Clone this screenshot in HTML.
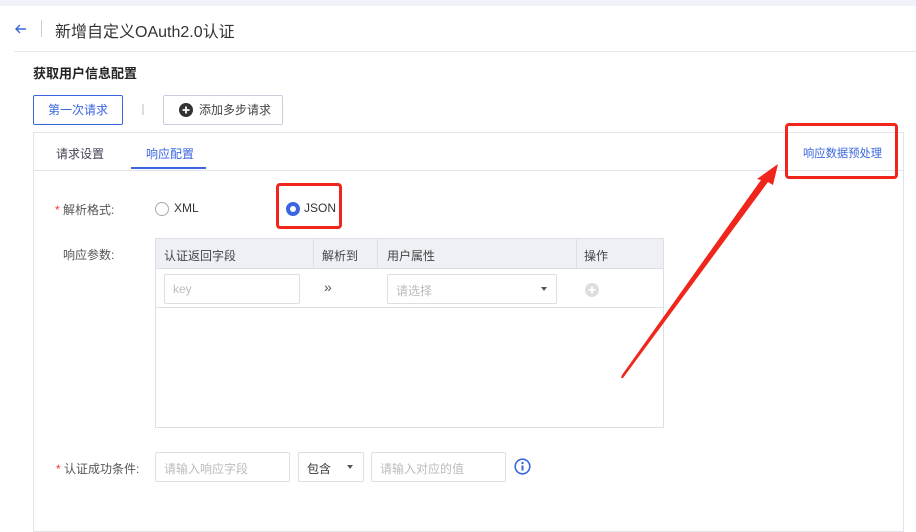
<!DOCTYPE html>
<html><head><meta charset="utf-8"><style>
*{box-sizing:border-box;margin:0;padding:0}
body{width:916px;height:524px;background:#fff;font-family:"Liberation Sans","Noto Sans CJK SC",sans-serif;position:relative;overflow:hidden;color:#333}
.a{position:absolute}
.t{font-size:12px;white-space:nowrap}
.inp{position:absolute;border:1px solid #dcdfe6;border-radius:2px;background:#fff}
.ph{color:#bbb;font-size:12px;position:absolute;top:7px;left:8px;white-space:nowrap}
</style></head><body>
<div class="a" style="left:0;top:0;width:916px;height:6px;background:#f0f2f7"></div>
<svg class="a" style="left:14px;top:22px" width="14" height="14" viewBox="0 0 14 14"><path d="M12 7H2M6 3L2 7l4 4" stroke="#3a66e0" stroke-width="1.4" fill="none"/></svg>
<div class="a" style="left:41px;top:20px;width:1px;height:17px;background:#ccc"></div>
<div class="a" style="left:55px;top:18px;font-size:16px;color:#333">新增自定义OAuth2.0认证</div>
<div class="a" style="left:14px;top:51px;width:902px;height:1px;background:#e6e8ee"></div>
<div class="a" style="left:33px;top:63px;font-size:13px;font-weight:bold;color:#222">获取用户信息配置</div>
<div class="a" style="left:33px;top:95px;width:90px;height:30px;border:1px solid #3a66e0;border-radius:2px;color:#3a66e0;font-size:12px;text-align:center;line-height:28px">第一次请求</div>
<div class="a" style="left:142px;top:104px;width:2px;height:11px;background:#ddd"></div>
<div class="a" style="left:163px;top:95px;width:120px;height:30px;border:1px solid #ccd;border-radius:2px;font-size:12px;color:#444;line-height:28px;padding-left:35px">添加多步请求</div>
<svg class="a" style="left:179px;top:103px" width="14" height="14"><circle cx="7" cy="7" r="7" fill="#333"/><path d="M7 3.5v7M3.5 7h7" stroke="#fff" stroke-width="1.8"/></svg>
<div class="a" style="left:33px;top:132px;width:871px;height:400px;border:1px solid #e2e4ea"></div>
<div class="a" style="left:33px;top:170px;width:871px;height:1px;background:#e2e4ea"></div>
<div class="a t" style="left:56px;top:145px;color:#445">请求设置</div>
<div class="a t" style="left:146px;top:145px;color:#3a66e0">响应配置</div>
<div class="a" style="left:131px;top:167px;width:75px;height:2px;background:#3a66e0"></div>
<div class="a" style="left:803px;top:145px;color:#3a66e0;font-size:11.3px;white-space:nowrap">响应数据预处理</div>
<div class="a" style="left:785px;top:123px;width:113px;height:56px;border:3px solid #f0261d;border-radius:4px"></div>
<div class="a t" style="left:55px;top:201px;color:#555"><span style="color:#f33">*</span> 解析格式:</div>
<div class="a" style="left:155px;top:202px;width:14px;height:14px;border:1px solid #aaa;border-radius:50%"></div>
<div class="a t" style="left:174px;top:201px;color:#333">XML</div>
<div class="a" style="left:286px;top:202px;width:14px;height:14px;border:4px solid #3a66e0;border-radius:50%"></div>
<div class="a t" style="left:304px;top:201px;color:#333">JSON</div>
<div class="a" style="left:276px;top:183px;width:66px;height:46px;border:3px solid #f0261d;border-radius:4px"></div>
<div class="a t" style="left:63px;top:246px;color:#555">响应参数:</div>
<div class="a" style="left:155px;top:238px;width:509px;height:190px;border:1px solid #dcdfe6"></div>
<div class="a" style="left:156px;top:239px;width:507px;height:30px;background:#eef0f5;border-bottom:1px solid #dcdfe6"></div>
<div class="a" style="left:156px;top:307px;width:507px;height:1px;background:#dcdfe6"></div>
<div class="a" style="left:313px;top:239px;width:1px;height:30px;background:#dcdfe6"></div>
<div class="a" style="left:377px;top:239px;width:1px;height:30px;background:#dcdfe6"></div>
<div class="a" style="left:576px;top:239px;width:1px;height:30px;background:#dcdfe6"></div>
<div class="a t" style="left:164px;top:247px;color:#444">认证返回字段</div>
<div class="a t" style="left:322px;top:247px;color:#444">解析到</div>
<div class="a t" style="left:387px;top:247px;color:#444">用户属性</div>
<div class="a t" style="left:584px;top:247px;color:#444">操作</div>
<div class="inp" style="left:164px;top:274px;width:136px;height:30px"><span class="ph">key</span></div>
<div class="a" style="left:324px;top:279px;color:#555;font-size:14px">»</div>
<div class="inp" style="left:387px;top:274px;width:170px;height:30px"><span class="ph">请选择</span><span class="a" style="right:9px;top:12px;border:3px solid transparent;border-top:4px solid #555;border-bottom:0"></span></div>
<svg class="a" style="left:585px;top:283px" width="14" height="14"><circle cx="7" cy="7" r="7" fill="#ddd"/><path d="M7 3.5v7M3.5 7h7" stroke="#fff" stroke-width="1.8"/></svg>
<div class="a t" style="left:56px;top:460px;color:#555"><span style="color:#f33">*</span> 认证成功条件:</div>
<div class="inp" style="left:155px;top:452px;width:135px;height:30px"><span class="ph">请输入响应字段</span></div>
<div class="inp" style="left:298px;top:452px;width:66px;height:30px"><span class="ph" style="color:#333">包含</span><span class="a" style="right:10px;top:12px;border:3px solid transparent;border-top:4px solid #555;border-bottom:0"></span></div>
<div class="inp" style="left:371px;top:452px;width:135px;height:30px"><span class="ph">请输入对应的值</span></div>
<svg class="a" style="left:514px;top:458px" width="17" height="17"><circle cx="8.5" cy="8.5" r="7.3" fill="none" stroke="#3a66e0" stroke-width="1.6"/><path d="M8.5 7.5v5" stroke="#3a66e0" stroke-width="2"/><circle cx="8.5" cy="5" r="1.2" fill="#3a66e0"/></svg>
<svg class="a" style="left:0;top:0" width="916" height="524"><polygon points="621,378 622,375 761,180 757,179 778,164 773,185 768,182 623,378" fill="#f0261d"/></svg>
</body></html>
